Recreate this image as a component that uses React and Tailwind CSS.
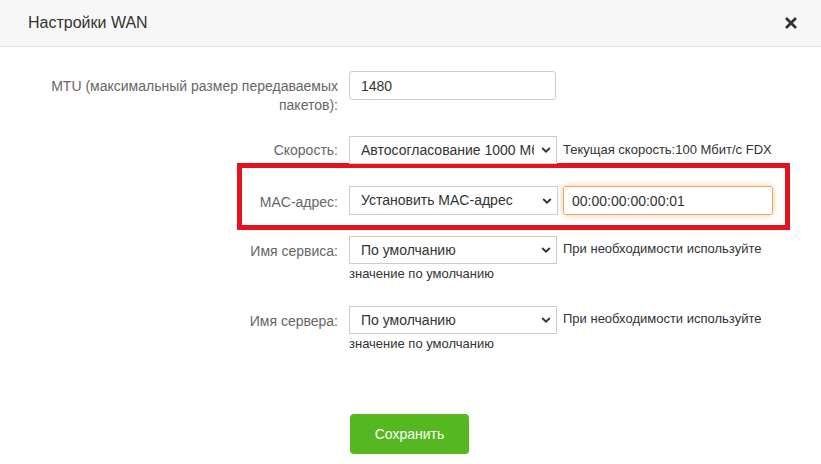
import React from "react";

function Chevron() {
  return (
    <svg
      className="pointer-events-none absolute right-[6px] top-1/2 -translate-y-1/2"
      width="10"
      height="7"
      viewBox="0 0 10 7"
    >
      <path d="M1.2 1.5 L5 5.2 L8.8 1.5" fill="none" stroke="#333" strokeWidth="1.8" />
    </svg>
  );
}

function Select({ value, options }) {
  return (
    <span className="relative inline-block align-middle">
      <select
        defaultValue={value}
        className="block h-[28px] w-[208px] appearance-none border border-[#cccccc] bg-white pl-[11px] pr-[22px] text-[14px] text-[#333] outline-none"
      >
        {options.map((o) => (
          <option key={o}>{o}</option>
        ))}
      </select>
      <Chevron />
    </span>
  );
}

export default function App() {
  return (
    <div className="min-h-[464px] bg-white font-['Liberation_Sans',Arial,sans-serif] text-[#333]">
      {/* Шапка */}
      <div className="flex h-[47px] items-center justify-between border-b border-[#e6e6e6] bg-[#f7f7f7] pl-[28px] pr-[23px]">
        <h1 className="text-[16px] text-[#333]">Настройки WAN</h1>
        <svg width="14" height="14" viewBox="0 0 14 14">
          <path d="M2 2 L12 12 M12 2 L2 12" stroke="#333" strokeWidth="2.8" />
        </svg>
      </div>

      {/* MTU */}
      <div className="mt-[24px] flex items-start">
        <label className="ml-[38px] w-[300px] pt-[6px] text-right text-[14px] leading-[19px] text-[#666]">
          MTU (максимальный размер передаваемых пакетов):
        </label>
        <input
          defaultValue="1480"
          className="ml-[11px] h-[29px] w-[207px] rounded-[3px] border border-[#cccccc] px-[11px] text-[14px] text-[#333] outline-none"
        />
      </div>

      {/* Скорость */}
      <div className="mt-[21px] flex items-center">
        <label className="ml-[38px] w-[300px] text-right text-[14px] text-[#666]">Скорость:</label>
        <div className="ml-[11px] flex items-center">
          <Select value="Автосогласование 1000 Мбит/с" options={["Автосогласование 1000 Мбит/с"]} />
          <span className="ml-[6px] text-[13px] text-[#333]">Текущая скорость:100 Мбит/с FDX</span>
        </div>
      </div>

      {/* MAC-адрес */}
      <div className="ml-[237px] mt-[-1px] flex h-[67px] w-[553px] items-start border-[5px] border-[#e3121f] pt-[18px]">
        <label className="w-[96px] pt-[6px] text-right text-[14px] text-[#666]">MAC-адрес:</label>
        <div className="ml-[11px] flex items-center">
          <span className="relative inline-block">
            <select
              defaultValue="Установить MAC-адрес"
              className="block h-[29px] w-[209px] appearance-none border border-[#cccccc] bg-white pl-[11px] pr-[22px] text-[14px] text-[#333] outline-none"
            >
              <option>Установить MAC-адрес</option>
            </select>
            <Chevron />
          </span>
          <input
            defaultValue="00:00:00:00:00:01"
            className="ml-[5px] h-[29px] w-[210px] rounded-[3px] border border-[#e9a866] px-[8px] text-[14px] text-[#333] shadow-[0_0_6px_rgba(240,150,60,0.55)] outline-none"
          />
        </div>
      </div>

      {/* Имя сервиса */}
      <div className="mt-[6px] flex items-start">
        <label className="ml-[38px] w-[300px] pt-[5px] text-right text-[14px] text-[#666]">Имя сервиса:</label>
        <div className="ml-[11px] w-[436px] text-[13px] leading-[20px] text-[#333]">
          <Select value="По умолчанию" options={["По умолчанию"]} />
          <span className="ml-[6px]">При необходимости используйте значение по умолчанию</span>
        </div>
      </div>

      {/* Имя сервера */}
      <div className="mt-[22px] flex items-start">
        <label className="ml-[38px] w-[300px] pt-[5px] text-right text-[14px] text-[#666]">Имя сервера:</label>
        <div className="ml-[11px] w-[436px] text-[13px] leading-[20px] text-[#333]">
          <Select value="По умолчанию" options={["По умолчанию"]} />
          <span className="ml-[6px]">При необходимости используйте значение по умолчанию</span>
        </div>
      </div>

      {/* Кнопка */}
      <div className="mt-[60px] pl-[350px]">
        <button className="h-[40px] w-[119px] rounded-[4px] bg-[#55b820] text-[14px] text-white">
          Сохранить
        </button>
      </div>
    </div>
  );
}
